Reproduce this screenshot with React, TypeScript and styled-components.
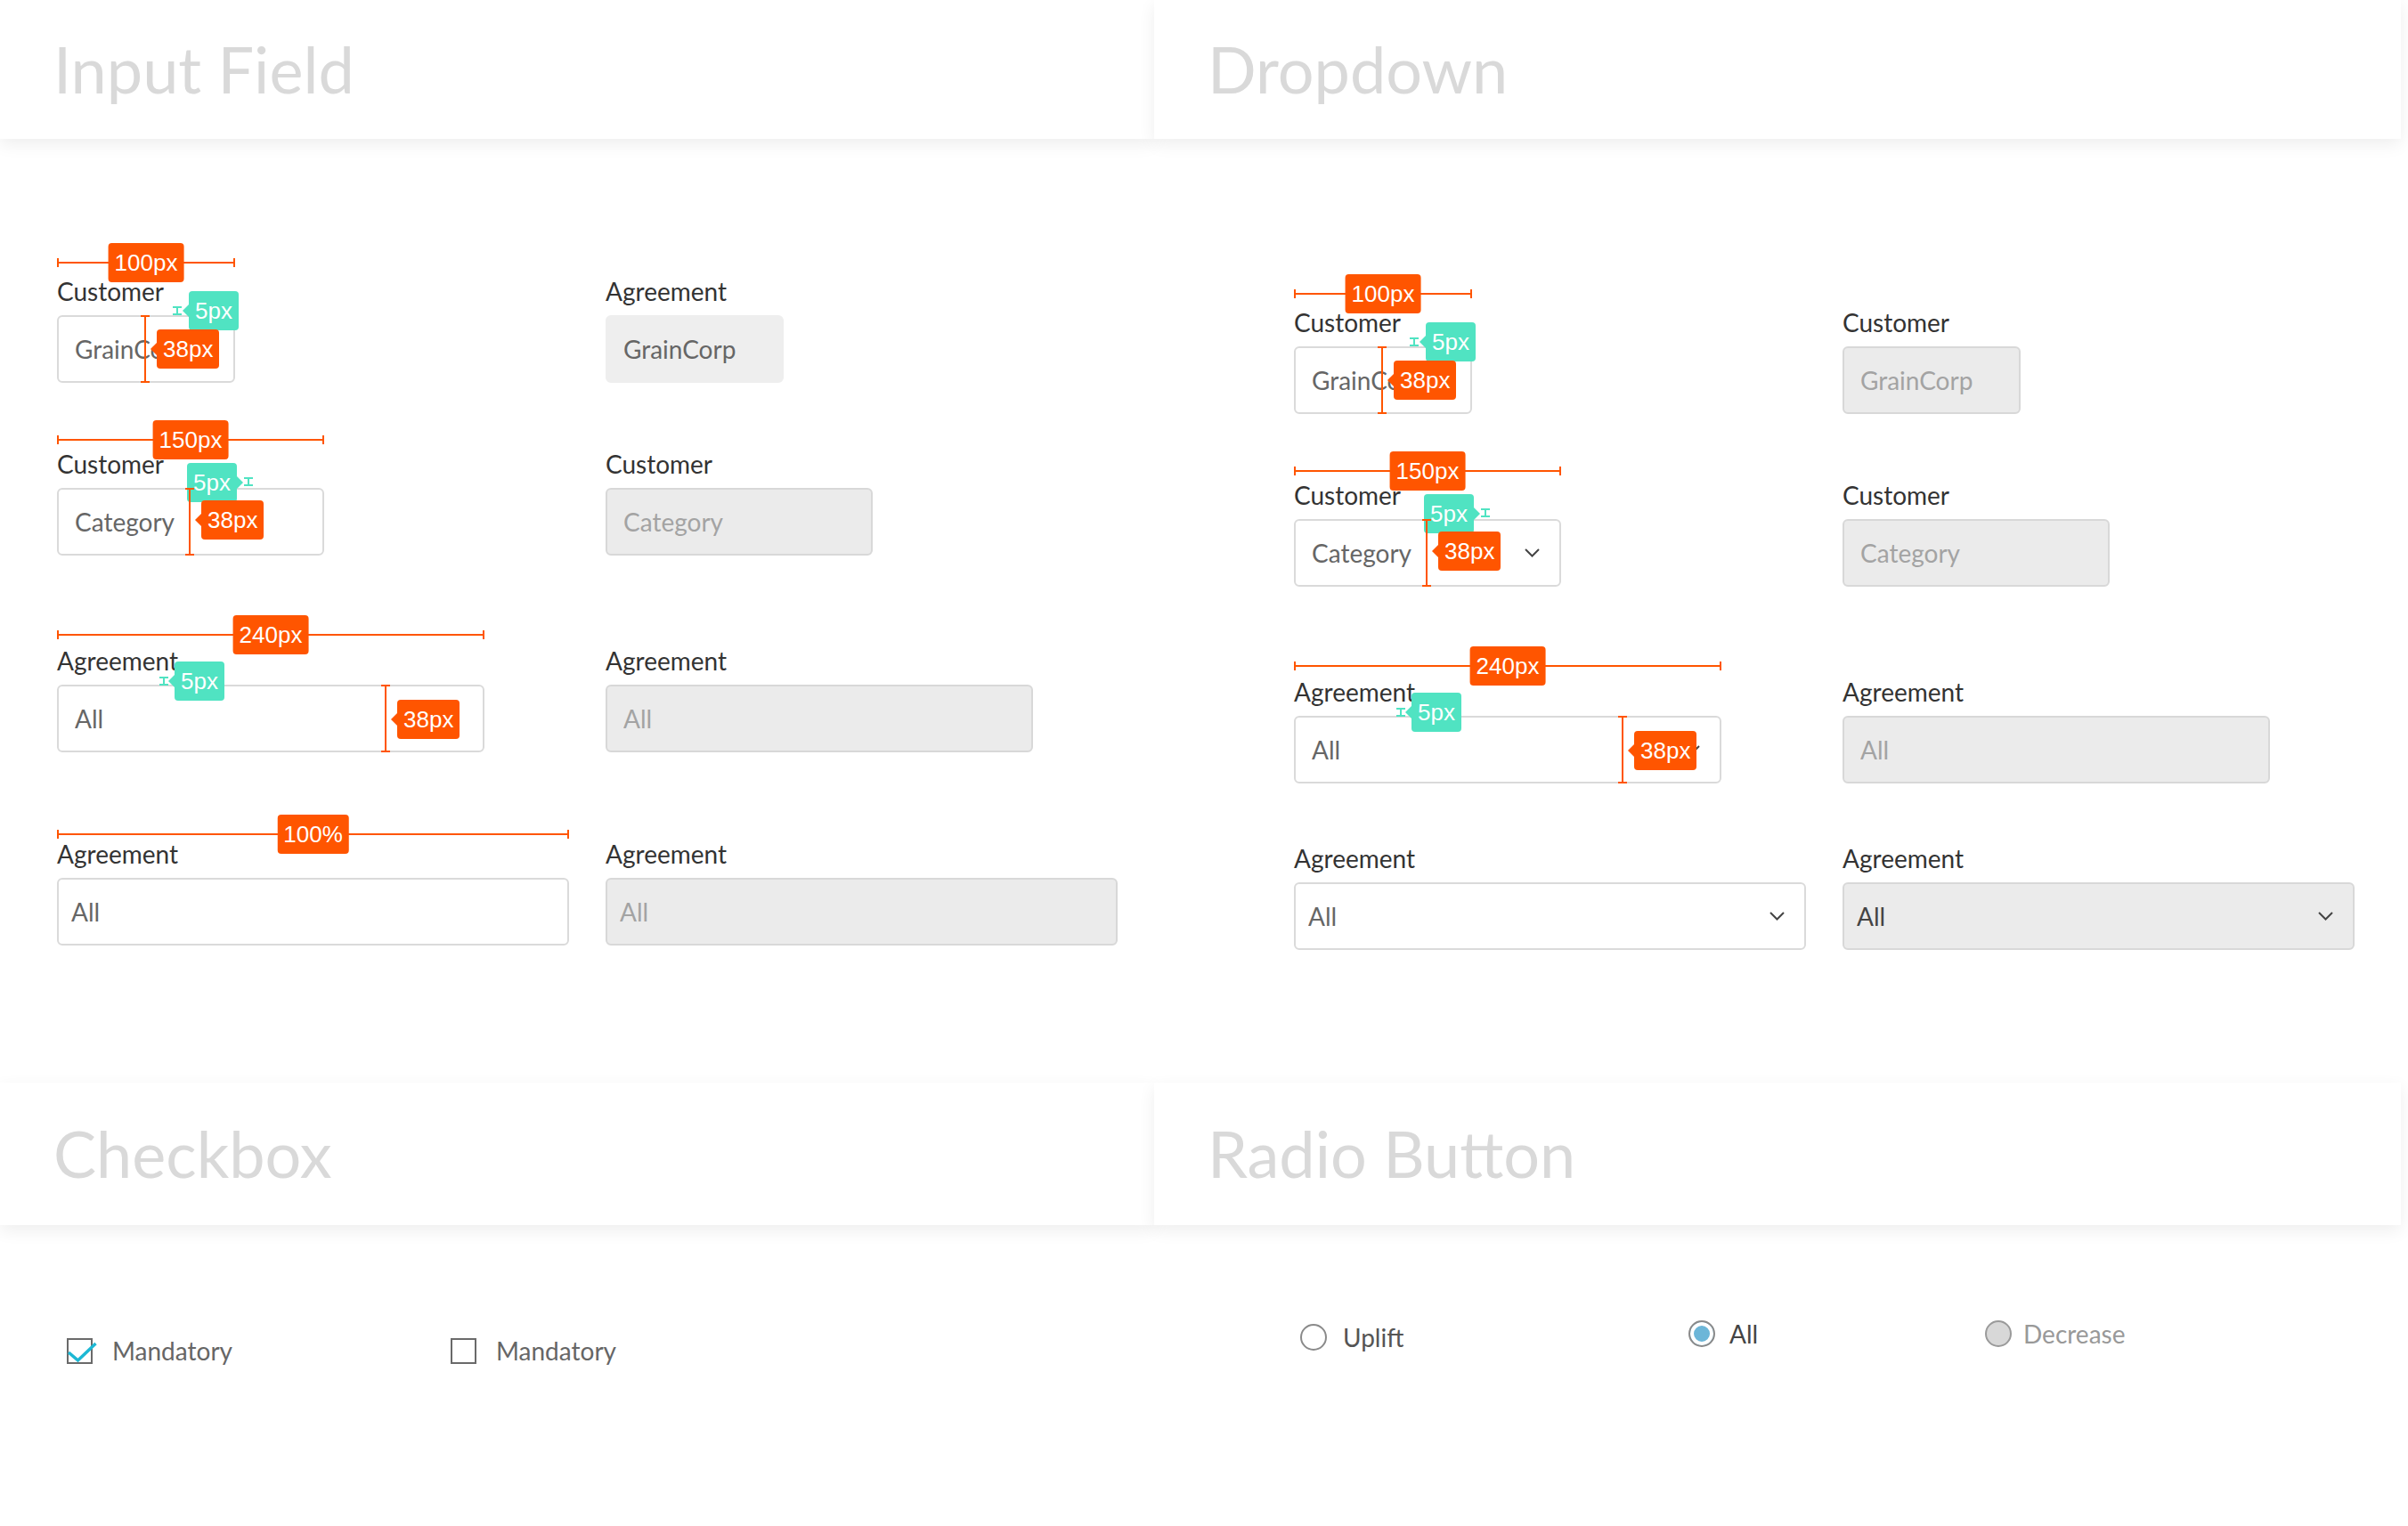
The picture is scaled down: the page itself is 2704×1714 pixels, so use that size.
import React from "react";
import styled, { createGlobalStyle, css } from "styled-components";

const ORANGE = "#ff5500";
const TEAL = "#50e3c2";

const GlobalStyle = createGlobalStyle`
  html, body { margin: 0; padding: 0; background: #ffffff; }
  body {
    width: 2704px;
    height: 1714px;
    overflow: hidden;
    font-family: Lato, "Open Sans", sans-serif;
  }
  *, *::before, *::after { box-sizing: border-box; }
`;

const Board = styled.div`
  display: grid;
  grid-template-columns: 1296px 1400px;
  grid-template-rows: 156px 1060px 160px 338px;
  width: 2704px;
  height: 1714px;
`;

const HeaderPanel = styled.header`
  position: relative;
  z-index: 1;
  display: flex;
  align-items: center;
  padding-left: 60px;
  background: #ffffff;
  box-shadow: 0 6px 18px rgba(0, 0, 0, 0.07);
`;

const Title = styled.h1`
  margin: 0;
  font-family: Lato, sans-serif;
  font-weight: 400;
  font-size: 72px;
  line-height: 1;
  color: #d9d9d9;
  padding-bottom: 2px;
`;

const FormSection = styled.section<{ $padTop: number; $padLeft: number }>`
  display: flex;
  flex-direction: column;
  padding: ${(p) => p.$padTop}px 0 0 ${(p) => p.$padLeft}px;
`;

const FieldRow = styled.div<{ $gap: number }>`
  display: grid;
  grid-template-columns: 575px 575px;
  column-gap: 41px;
  align-items: start;
  margin-top: ${(p) => p.$gap}px;
`;

const FieldWrap = styled.div<{ $w: number }>`
  position: relative;
  display: flex;
  flex-direction: column;
  gap: 10px;
  width: ${(p) => p.$w}px;
`;

const Label = styled.label`
  font-size: 28px;
  line-height: 34px;
  color: #333333;
  white-space: nowrap;
`;

type Variant = "default" | "readonly" | "disabled" | "disabledDark";

const Box = styled.div<{ $variant: Variant; $pad: number }>`
  display: flex;
  align-items: center;
  height: 76px;
  padding: 0 22px 0 ${(p) => p.$pad}px;
  border: 2px solid #dadada;
  border-radius: 6px;
  background: #ffffff;
  font-size: 28px;
  color: #666666;
  white-space: nowrap;
  overflow: hidden;
  ${(p) =>
    p.$variant === "readonly" &&
    css`
      background: #eeeeee;
      border-color: #eeeeee;
    `}
  ${(p) =>
    p.$variant === "disabled" &&
    css`
      background: #ebebeb;
      border-color: #d8d8d8;
      color: #a3a3a3;
    `}
  ${(p) =>
    p.$variant === "disabledDark" &&
    css`
      background: #ebebeb;
      border-color: #d8d8d8;
      color: #444444;
    `}
`;

const Value = styled.span`
  flex: 1 1 auto;
  overflow: hidden;
`;

const ChevronIcon = styled.svg`
  flex: 0 0 auto;
  width: 17px;
  height: 10px;
  margin-left: 8px;
`;

const Chevron = () => (
  <ChevronIcon viewBox="0 0 17 10">
    <polyline points="1,1 8.5,8.5 16,1" fill="none" stroke="#444" strokeWidth="2" />
  </ChevronIcon>
);

/* ---------- spec annotations ---------- */

const Badge = styled.span<{ $tone: "orange" | "teal"; $arrow?: "left" | "right" }>`
  position: absolute;
  display: inline-flex;
  align-items: center;
  justify-content: center;
  height: 44px;
  padding: 0 7px;
  border-radius: 4px;
  background: ${(p) => (p.$tone === "orange" ? ORANGE : TEAL)};
  color: #ffffff;
  font-family: "Liberation Sans", Arial, sans-serif;
  font-size: 26px;
  line-height: 1;
  white-space: nowrap;
  z-index: 2;
  ${(p) =>
    p.$arrow === "left" &&
    css`
      &::before {
        content: "";
        position: absolute;
        left: -7px;
        top: 50%;
        transform: translateY(-50%);
        border-top: 7px solid transparent;
        border-bottom: 7px solid transparent;
        border-right: 7px solid ${p.$tone === "orange" ? ORANGE : TEAL};
      }
    `}
  ${(p) =>
    p.$arrow === "right" &&
    css`
      &::before {
        content: "";
        position: absolute;
        right: -7px;
        top: 50%;
        transform: translateY(-50%);
        border-top: 7px solid transparent;
        border-bottom: 7px solid transparent;
        border-left: 7px solid ${p.$tone === "orange" ? ORANGE : TEAL};
      }
    `}
`;

const PinBadge = styled(Badge)<{ $x: number; $y: number }>`
  left: ${(p) => p.$x}px;
  top: ${(p) => p.$y}px;
`;

const CenterBadge = styled(Badge)`
  left: 50%;
  top: 50%;
  transform: translate(-50%, -50%);
`;

const DimLine = styled.div<{ $top: number }>`
  position: absolute;
  left: 0;
  right: 0;
  top: ${(p) => p.$top - 1}px;
  height: 2px;
  background: ${ORANGE};
  z-index: 2;
  &::before,
  &::after {
    content: "";
    position: absolute;
    top: -4px;
    width: 2px;
    height: 10px;
    background: ${ORANGE};
  }
  &::before {
    left: 0;
  }
  &::after {
    right: 0;
  }
`;

const HeightLine = styled.span<{ $x: number }>`
  position: absolute;
  left: ${(p) => p.$x - 1}px;
  top: 44px;
  height: 76px;
  width: 2px;
  background: ${ORANGE};
  z-index: 2;
  &::before,
  &::after {
    content: "";
    position: absolute;
    left: -4px;
    width: 10px;
    height: 2px;
    background: ${ORANGE};
  }
  &::before {
    top: 0;
  }
  &::after {
    bottom: 0;
  }
`;

const IBeam = styled.span<{ $x: number; $y: number }>`
  position: absolute;
  left: ${(p) => p.$x}px;
  top: ${(p) => p.$y}px;
  width: 10px;
  height: 10px;
  border-top: 2px solid ${TEAL};
  border-bottom: 2px solid ${TEAL};
  z-index: 2;
  &::before {
    content: "";
    position: absolute;
    left: 4px;
    top: 0;
    bottom: 0;
    width: 2px;
    background: ${TEAL};
  }
`;

type Spec = {
  dim: number;
  dimLabel: string;
  gap?: { x: number; y: number; side: "left" | "right"; ix: number; iy: number };
  height?: { x: number; bx: number; by: number };
};

const specs: Spec[] = [
  {
    dim: -15,
    dimLabel: "100px",
    gap: { x: 148, y: 17, side: "left", ix: 130, iy: 34 },
    height: { x: 99, bx: 112, by: 60 },
  },
  {
    dim: -10,
    dimLabel: "150px",
    gap: { x: 146, y: 16, side: "right", ix: 210, iy: 32 },
    height: { x: 149, bx: 162, by: 58 },
  },
  {
    dim: -12,
    dimLabel: "240px",
    gap: { x: 132, y: 18, side: "left", ix: 115, iy: 35 },
    height: { x: 369, bx: 382, by: 61 },
  },
  { dim: -5, dimLabel: "100%" },
];

const SpecMarks = ({ spec }: { spec: Spec }) => (
  <>
    <DimLine $top={spec.dim}>
      <CenterBadge $tone="orange">{spec.dimLabel}</CenterBadge>
    </DimLine>
    {spec.gap && (
      <>
        <IBeam $x={spec.gap.ix} $y={spec.gap.iy} />
        <PinBadge $tone="teal" $arrow={spec.gap.side} $x={spec.gap.x} $y={spec.gap.y}>
          5px
        </PinBadge>
      </>
    )}
    {spec.height && (
      <>
        <HeightLine $x={spec.height.x} />
        <PinBadge $tone="orange" $arrow="left" $x={spec.height.bx} $y={spec.height.by}>
          38px
        </PinBadge>
      </>
    )}
  </>
);

type FieldDef = {
  label: string;
  value: string;
  variant?: Variant;
  chevron?: boolean;
};

const Field = ({
  def,
  width,
  pad,
  spec,
}: {
  def: FieldDef;
  width: number;
  pad: number;
  spec?: Spec;
}) => (
  <FieldWrap $w={width}>
    <Label>{def.label}</Label>
    <Box $variant={def.variant ?? "default"} $pad={pad}>
      <Value>{def.value}</Value>
      {def.chevron && <Chevron />}
    </Box>
    {spec && <SpecMarks spec={spec} />}
  </FieldWrap>
);

type RowDef = {
  gap: number;
  width: number;
  pad: number;
  spec?: Spec;
  left: FieldDef;
  right: FieldDef;
};

const inputRows: RowDef[] = [
  {
    gap: 0,
    width: 200,
    pad: 18,
    spec: specs[0],
    left: { label: "Customer", value: "GrainCorp" },
    right: { label: "Agreement", value: "GrainCorp", variant: "readonly" },
  },
  {
    gap: 74,
    width: 300,
    pad: 18,
    spec: specs[1],
    left: { label: "Customer", value: "Category" },
    right: { label: "Customer", value: "Category", variant: "disabled" },
  },
  {
    gap: 101,
    width: 480,
    pad: 18,
    spec: specs[2],
    left: { label: "Agreement", value: "All" },
    right: { label: "Agreement", value: "All", variant: "disabled" },
  },
  {
    gap: 97,
    width: 575,
    pad: 14,
    spec: specs[3],
    left: { label: "Agreement", value: "All" },
    right: { label: "Agreement", value: "All", variant: "disabled" },
  },
];

const dropdownRows: RowDef[] = [
  {
    gap: 0,
    width: 200,
    pad: 18,
    spec: specs[0],
    left: { label: "Customer", value: "GrainCorp", chevron: true },
    right: { label: "Customer", value: "GrainCorp", variant: "disabled" },
  },
  {
    gap: 74,
    width: 300,
    pad: 18,
    spec: specs[1],
    left: { label: "Customer", value: "Category", chevron: true },
    right: { label: "Customer", value: "Category", variant: "disabled" },
  },
  {
    gap: 101,
    width: 480,
    pad: 18,
    spec: specs[2],
    left: { label: "Agreement", value: "All", chevron: true },
    right: { label: "Agreement", value: "All", variant: "disabled" },
  },
  {
    gap: 67,
    width: 575,
    pad: 14,
    left: { label: "Agreement", value: "All", chevron: true },
    right: { label: "Agreement", value: "All", variant: "disabledDark", chevron: true },
  },
];

const FieldGrid = ({ rows }: { rows: RowDef[] }) => (
  <>
    {rows.map((r, i) => (
      <FieldRow key={i} $gap={r.gap}>
        <Field def={r.left} width={r.width} pad={r.pad} spec={r.spec} />
        <Field def={r.right} width={r.width} pad={r.pad} />
      </FieldRow>
    ))}
  </>
);

/* ---------- checkbox & radio ---------- */

const ChoiceSection = styled.section<{ $padTop: number; $padLeft: number }>`
  display: flex;
  align-items: flex-start;
  padding: ${(p) => p.$padTop}px 0 0 ${(p) => p.$padLeft}px;
`;

const Choice = styled.label<{ $w?: number; $offset?: number; $gap: number; $color: string }>`
  display: flex;
  align-items: center;
  gap: ${(p) => p.$gap}px;
  width: ${(p) => (p.$w ? `${p.$w}px` : "auto")};
  margin-top: ${(p) => p.$offset ?? 0}px;
  font-size: 28px;
  line-height: 34px;
  color: ${(p) => p.$color};
`;

const CheckSquare = styled.span`
  position: relative;
  flex: 0 0 auto;
  width: 29px;
  height: 29px;
  border: 2px solid #6a6a6a;
`;

const CheckMark = styled.svg`
  position: absolute;
  left: -2px;
  top: -2px;
  width: 36px;
  height: 29px;
  overflow: visible;
`;

const RadioDot = styled.span<{ $state: "off" | "on" | "disabled" }>`
  flex: 0 0 auto;
  width: 30px;
  height: 30px;
  border-radius: 50%;
  border: 2px solid #8a8a8a;
  background: #ffffff;
  ${(p) =>
    p.$state === "on" &&
    css`
      background: #6cb6d8;
      box-shadow: inset 0 0 0 4px #ffffff;
    `}
  ${(p) =>
    p.$state === "disabled" &&
    css`
      background: #d8d8d8;
      border-color: #9a9a9a;
    `}
`;

export default function App() {
  return (
    <>
      <GlobalStyle />
      <Board>
        <HeaderPanel>
          <Title>Input Field</Title>
        </HeaderPanel>
        <HeaderPanel>
          <Title>Dropdown</Title>
        </HeaderPanel>

        <FormSection $padTop={154} $padLeft={64}>
          <FieldGrid rows={inputRows} />
        </FormSection>
        <FormSection $padTop={189} $padLeft={157}>
          <FieldGrid rows={dropdownRows} />
        </FormSection>

        <HeaderPanel>
          <Title>Checkbox</Title>
        </HeaderPanel>
        <HeaderPanel>
          <Title>Radio Button</Title>
        </HeaderPanel>

        <ChoiceSection $padTop={124} $padLeft={75}>
          <Choice $w={431} $gap={22} $color="#666666">
            <CheckSquare>
              <CheckMark viewBox="0 0 36 29">
                <polyline
                  points="2,16 12.5,25 32.5,6"
                  fill="none"
                  stroke="#1db8d4"
                  strokeWidth="3.5"
                />
              </CheckMark>
            </CheckSquare>
            Mandatory
          </Choice>
          <Choice $gap={22} $color="#666666">
            <CheckSquare />
            Mandatory
          </Choice>
        </ChoiceSection>

        <ChoiceSection $padTop={105} $padLeft={164}>
          <Choice $w={436} $offset={4} $gap={18} $color="#555555">
            <RadioDot $state="off" />
            Uplift
          </Choice>
          <Choice $w={333} $gap={16} $color="#444444">
            <RadioDot $state="on" />
            All
          </Choice>
          <Choice $gap={13} $color="#999999">
            <RadioDot $state="disabled" />
            Decrease
          </Choice>
        </ChoiceSection>
      </Board>
    </>
  );
}
